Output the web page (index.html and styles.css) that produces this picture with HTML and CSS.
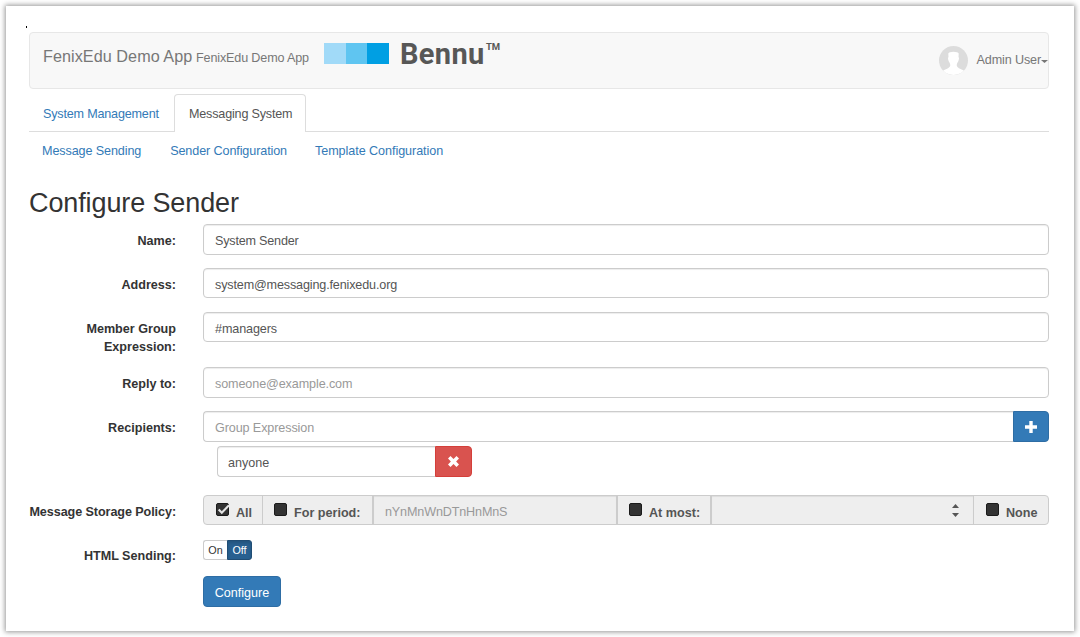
FILE: index.html
```html
<!DOCTYPE html>
<html lang="en">
<head>
<meta charset="utf-8">
<title>Configure Sender</title>
<link rel="stylesheet" href="styles.css">
</head>
<body>
<main class="page">
  <div class="dot"></div>
  <header class="navbar">
    <div class="brand">FenixEdu Demo App</div>
    <div class="brand-small">FenixEdu Demo App</div>
    <div class="stripes"><i></i><i></i><i></i></div>
    <div class="bennu">Bennu</div><div class="tm">TM</div>
    <svg class="avatar" viewBox="0 0 29 29"><circle cx="14.5" cy="14.5" r="14.5" fill="#dcdcdc"/><path d="M9.300 7.500Q10 5.700 14.500 5.700T19.700 7.500L19.500 11.300Q20.600 11.500 19.300 15.200Q18 17 17.800 18.500V20Q18.500 22 24.900 24.500A14.500 14.500 0 0 1 4.100 24.500Q10.500 22 11.200 20V18.500Q11 17 9.700 15.200Q8.400 11.500 9.500 11.300Z" fill="#fff"/></svg>
    <div class="user">Admin User</div><span class="caret"></span>
  </header>
  <nav class="tabs"><a class="tab">System Management</a><a class="tab active">Messaging System</a></nav>
  <nav class="subnav"><a>Message Sending</a><a>Sender Configuration</a><a class="template">Template Configuration</a></nav>
  <h1>Configure Sender</h1>
  <form class="form">
    <div class="row"><label>Name:</label><div class="input tall tight">System Sender</div></div>
    <div class="row"><label>Address:</label><div class="input address">system@messaging.fenixedu.org</div></div>
    <div class="row two"><label>Member Group<br>Expression:</label><div class="input">#managers</div></div>
    <div class="row"><label>Reply to:</label><div class="input tall hint">someone@example.com</div></div>
    <div class="row recipients"><label>Recipients:</label>
      <div>
        <div class="group"><div class="input tall hint">Group Expression</div><div class="add"><svg width="12" height="12" viewBox="0 0 12 12"><path d="M4.300 0H7.700V4.300H12V7.700H7.700V12H4.300V7.700H0V4.300H4.300Z" fill="#fff"/></svg></div></div>
        <div class="group member"><div class="input tall">anyone</div><div class="remove"><svg width="11" height="11" viewBox="0 0 11 11"><path d="M2.500 0L5.500 2.900L8.500 0L11 2.500L8.100 5.500L11 8.500L8.500 11L5.500 8.100L2.500 11L0 8.500L2.900 5.500L0 2.500Z" fill="#fff"/></svg></div></div>
      </div>
    </div>
    <div class="row policy-row"><label>Message Storage Policy:</label>
      <div class="policy">
        <div class="cell all"><span class="box"><svg width="15" height="15" viewBox="0 0 15 15"><path d="M2.700 6.500L5.800 9.800L13 2.200" fill="none" stroke="#e6e6e6" stroke-width="2.100"/></svg></span><b>All</b></div>
        <div class="cell period"><span class="box"></span><b>For period:</b></div>
        <div class="cell period-input">nYnMnWnDTnHnMnS</div>
        <div class="cell most"><span class="box"></span><b>At most:</b></div>
        <div class="cell most-input"><svg width="7" height="13" viewBox="0 0 7 13"><path d="M0 4L3.500 0L7 4ZM0 9H7L3.500 13Z" fill="#555"/></svg></div>
        <div class="cell none"><span class="box"></span><b>None</b></div>
      </div>
    </div>
    <div class="row html-row"><label>HTML Sending:</label><div class="toggle"><span class="on">On</span><span class="off">Off</span></div></div>
    <div class="row"><span></span><div class="submit">Configure</div></div>
  </form>
</main>
</body>
</html>
```
FILE: styles.css
```css
* { box-sizing: border-box; }
body { margin: 0; padding: 6px; height: 637px; overflow: hidden; background: #fff; font: 12.6px/18px "Liberation Sans", Arial, sans-serif; letter-spacing: -.11px; color: #333; }
.page { width: 1068px; height: 625px; padding: 20px 25px 0 23px; background: #fff; box-shadow: 0 0 5px 1px rgba(0,0,0,.42); }
.dot { width: 1px; height: 2px; margin-left: -3px; background: #000; }
.navbar { display: flex; height: 57px; margin-top: 4px; padding-left: 13px; background: #f8f8f8; border: 1px solid #e7e7e7; border-radius: 4px; color: #777; white-space: nowrap; }
.brand { width: 153px; padding-top: 14px; font-size: 16.200px; letter-spacing: .05px; }
.brand-small { width: 128px; padding-top: 16px; letter-spacing: -.15px; }
.stripes { display: flex; width: 65px; height: 21px; margin-top: 10px; }
.stripes i { flex: 1; background: #a1daf8; }
.stripes i:nth-child(2) { background: #5fc5f1; }
.stripes i:nth-child(3) { background: #009fe3; }
.bennu { width: 84px; margin-left: 11px; padding-top: 6px; font: bold 29px/30px Roboto, sans-serif; letter-spacing: .35px; color: #575756; }
.tm { padding-top: 9px; margin-left: 2px; font: bold 9.500px/10px Roboto, sans-serif; letter-spacing: -.1px; color: #575756; }
.avatar { width: 29px; height: 29px; margin: 13px 9px 0 auto; }
.user { padding-top: 18px; letter-spacing: -.13px; }
.caret { width: 7px; height: 3px; margin: 27px 0 0; background: #777; clip-path: polygon(0 0, 100% 0, 50% 100%); }
.tabs { display: flex; height: 38px; margin-top: 5px; border-bottom: 1px solid #ddd; letter-spacing: -.19px; }
.tab { width: 145px; height: 38px; padding: 11px 0 0 14px; color: #337ab7; white-space: nowrap; }
.active { width: 132px; border: 1px solid #ddd; border-bottom: 0; border-radius: 4px 4px 0 0; background: #fff; color: #555; padding-top: 10px; }
.subnav { display: flex; gap: 29px; height: 38px; padding: 10px 0 0 13px; color: #337ab7; white-space: nowrap; }
.template { margin-left: -1px; letter-spacing: -.06px; }
h1 { margin: 16px 0 0; height: 38px; font-size: 27px; line-height: 34px; font-weight: normal; }
.row { display: grid; grid-template-columns: 147px 846px; column-gap: 27px; height: 44px; }
.row.two { height: 55px; }
label { padding-top: 8px; text-align: right; font-weight: bold; white-space: nowrap; letter-spacing: 0; }
.policy-row label { letter-spacing: -.08px; }
.input { height: 30px; padding: 7px 11px 0; background: #fff; border: 1px solid #ccc; border-radius: 4px; box-shadow: inset 0 1px 1px rgba(0,0,0,.075); color: #555; }
.tight { letter-spacing: -.2px; }
.address { letter-spacing: -.15px; }
.tall { height: 31px; }
.hint { color: #999; }
.row.recipients { height: 84px; }
.group { display: flex; }
.group .input { flex: 1; border-right: 0; border-radius: 4px 0 0 4px; }
.member { width: 255px; margin: 4px 0 0 14px; }
.member .input { padding-left: 10px; letter-spacing: 0; }
.add, .remove { display: flex; align-items: center; justify-content: center; width: 36px; height: 31px; border: 1px solid #2e6da4; border-radius: 0 4px 4px 0; background: #337ab7; }
.remove { width: 37px; border-color: #d43f3a; background: #d9534f; }
.row.policy-row { height: 45px; }
.policy { display: flex; height: 30px; border: 1px solid #ccc; border-radius: 4px; background: #eee; color: #555; white-space: nowrap; }
.cell { display: flex; padding-top: 7px; border-right: 1px solid #ccc; }
.cell b { padding-top: 1px; letter-spacing: 0; }
.box { flex: none; width: 13px; height: 13px; border: 1px solid #1b1b1b; border-radius: 2px; background: #333; }
.box svg { display: block; margin: -1px; }
.all { width: 59px; padding-left: 12px; }
.all b { margin-left: 7px; }
.period { width: 111px; padding-left: 11px; border-right-width: 2px; }
.period b, .most b, .none b { margin-left: 7px; }
.period-input { width: 244px; padding-left: 11px; border-right-width: 2px; color: #999; letter-spacing: -.15px; box-shadow: inset 0 1px 1px rgba(0,0,0,.075); }
.most { width: 94px; padding-left: 11px; border-right-width: 2px; }
.most-input { width: 262px; justify-content: flex-end; padding: 8px 14px 0 0; box-shadow: inset 0 1px 1px rgba(0,0,0,.075); }
.none { flex: 1; border-right: 0; padding-left: 12px; }
.row.html-row { height: 36px; }
.toggle { display: flex; width: 49px; height: 20px; font-size: 10.800px; line-height: 18px; text-align: center; letter-spacing: 0; }
.html-row label { padding-top: 7px; }
.on { width: 24px; border: 1px solid #ccc; border-right: 0; border-radius: 3px 0 0 3px; }
.off { width: 25px; border: 1px solid #204d74; border-radius: 0 3px 3px 0; background: #286090; color: #fff; box-shadow: inset 0 2px 3px rgba(0,0,0,.125); }
.submit { width: 78px; height: 31px; padding-top: 7px; border: 1px solid #2e6da4; border-radius: 4px; background: #337ab7; color: #fff; text-align: center; letter-spacing: 0; }
```
